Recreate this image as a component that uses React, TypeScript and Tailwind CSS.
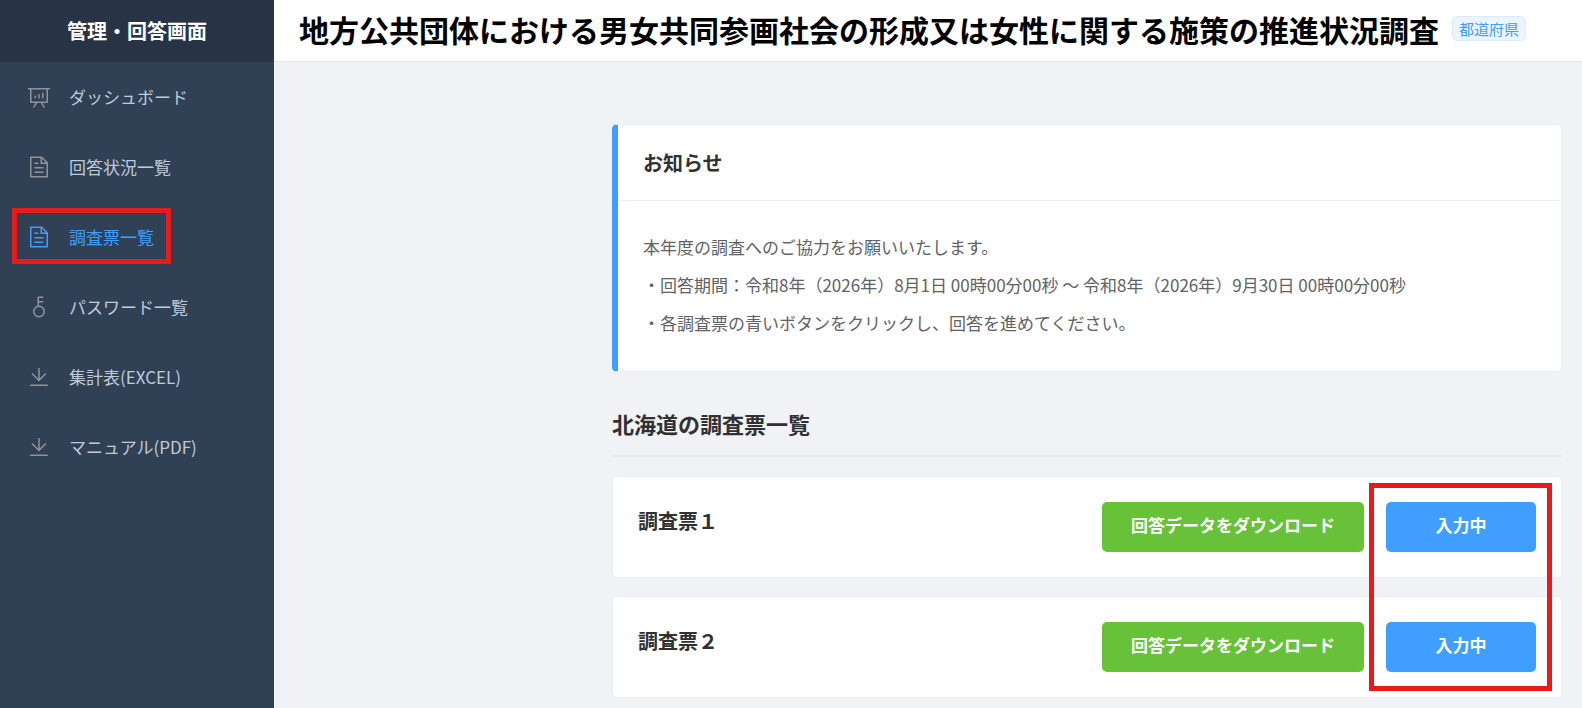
const ICONS = {
  board:
    "M665.216 768l110.848 192h-73.856L591.36 768H433.024L322.176 960H248.32l110.848-192H160a32 32 0 0 1-32-32V192H64a32 32 0 0 1 0-64h896a32 32 0 1 1 0 64h-64v544a32 32 0 0 1-32 32H665.216zM832 192H192v512h640V192zM352 448a32 32 0 0 1 32 32v64a32 32 0 0 1-64 0v-64a32 32 0 0 1 32-32zm160-64a32 32 0 0 1 32 32v128a32 32 0 0 1-64 0V416a32 32 0 0 1 32-32zm160-64a32 32 0 0 1 32 32v192a32 32 0 1 1-64 0V352a32 32 0 0 1 32-32z",
  document:
    "M832 384H576V128H192v768h640V384zm-26.496-64L640 154.496V320h165.504zM160 64h480l256 256v608a32 32 0 0 1-32 32H160a32 32 0 0 1-32-32V96a32 32 0 0 1 32-32zm160 448h384v64H320v-64zm0-192h160v64H320v-64zm0 384h384v64H320v-64z",
  key: "M448 456.064V96a32 32 0 0 1 32-32.064L672 64a32 32 0 0 1 0 64H512v128h160a32 32 0 0 1 0 64H512v128a256 256 0 1 1-64 8.064zM512 896a192 192 0 1 0 0-384 192 192 0 0 0 0 384z",
  download:
    "M160 832h704a32 32 0 1 1 0 64H160a32 32 0 1 1 0-64zm384-253.696 236.288-236.352 45.248 45.248L508.8 704 192 387.2l45.248-45.248L480 584.704V128h64v450.304z",
};

type IconName = keyof typeof ICONS;

const MENU: { label: string; icon: IconName; active?: boolean }[] = [
  { label: "ダッシュボード", icon: "board" },
  { label: "回答状況一覧", icon: "document" },
  { label: "調査票一覧", icon: "document", active: true },
  { label: "パスワード一覧", icon: "key" },
  { label: "集計表(EXCEL)", icon: "download" },
  { label: "マニュアル(PDF)", icon: "download" },
];

const NOTICES = [
  "本年度の調査へのご協力をお願いいたします。",
  "・回答期間：令和8年（2026年）8月1日 00時00分00秒 ～ 令和8年（2026年）9月30日 00時00分00秒",
  "・各調査票の青いボタンをクリックし、回答を進めてください。",
];

const SURVEYS = ["調査票１", "調査票２"];

function Icon({ name }: { name: IconName }) {
  return (
    <svg viewBox="0 0 1024 1024" className="size-6 fill-current" aria-hidden="true">
      <path d={ICONS[name]} />
    </svg>
  );
}

function Sidebar() {
  return (
    <aside className="w-[274px] shrink-0 bg-[#304156]">
      <div className="flex h-[62px] items-center justify-center bg-[#283446] text-xl font-bold text-white">
        管理・回答画面
      </div>
      <nav>
        <ul>
          {MENU.map((item) => (
            <li key={item.label} className="relative">
              <a
                href="#"
                className={
                  item.active
                    ? "flex h-[70px] items-center gap-[18px] px-[27px] text-[17px] text-[#409eff]"
                    : "flex h-[70px] items-center gap-[18px] px-[27px] text-[17px] text-[#bfcbd9]"
                }
              >
                <span className={item.active ? "text-[#409eff]" : "text-[#909399]"}>
                  <Icon name={item.icon} />
                </span>
                {item.label}
              </a>
              {item.active && (
                <div className="pointer-events-none absolute top-1.5 left-3 h-14 w-[159px] border-5 border-[#e61c1c]" />
              )}
            </li>
          ))}
        </ul>
      </nav>
    </aside>
  );
}

function NoticeCard() {
  return (
    <section className="rounded-[5px] border border-l-6 border-[#ebeef5] border-l-[#409eff] bg-white">
      <h2 className="border-b border-[#ebeef5] px-[25px] py-[22px] text-xl leading-[31px] font-bold text-[#303133]">
        お知らせ
      </h2>
      <div className="px-[25px] pt-[27px] pb-[29px] text-[17px] leading-[38px] text-[#606266]">
        {NOTICES.map((line) => (
          <p key={line}>{line}</p>
        ))}
      </div>
    </section>
  );
}

function SurveyList() {
  return (
    <section>
      <h2 className="mt-9 border-b-2 border-[#e4e7ed] pb-4 text-[22px] leading-[31px] font-bold text-[#303133]">
        北海道の調査票一覧
      </h2>
      <ul className="relative mt-[19px] flex flex-col gap-[18px]">
        {SURVEYS.map((name) => (
          <li
            key={name}
            className="flex items-start justify-between rounded-[5px] border border-[#ebeef5] bg-white p-[25px]"
          >
            <h3 className="text-xl leading-[38px] font-bold text-[#303133]">{name}</h3>
            <div className="flex gap-[22px]">
              <button
                type="button"
                className="h-[50px] w-[262px] rounded-[5px] bg-[#67c23a] pb-1 text-[17px] font-bold text-white"
              >
                回答データをダウンロード
              </button>
              <button
                type="button"
                className="h-[50px] w-[150px] rounded-[5px] bg-[#409eff] pb-1 text-[17px] font-bold text-white"
              >
                入力中
              </button>
            </div>
          </li>
        ))}
        <li
          aria-hidden="true"
          className="pointer-events-none absolute inset-y-[7px] right-2.5 w-[183px] border-5 border-[#e61c1c]"
        />
      </ul>
    </section>
  );
}

export default function App() {
  return (
    <div className="flex min-h-screen bg-[#f0f2f5] font-['Noto_Sans_CJK_JP',sans-serif]">
      <Sidebar />
      <div className="min-w-0 flex-1">
        <header className="flex h-[62px] items-center gap-[13px] border-b border-[#e4e7ed] bg-white px-[25px] pb-1">
          <h1 className="text-3xl font-bold text-black">
            地方公共団体における男女共同参画社会の形成又は女性に関する施策の推進状況調査
          </h1>
          <span className="shrink-0 rounded-[5px] border border-[#d9ecff] bg-[#ecf5ff] px-1.5 text-[15px] leading-[23px] text-[#409eff]">
            都道府県
          </span>
        </header>
        <main className="flex justify-end px-5 pt-[62px] pb-2.5">
          <div className="w-full max-w-[950px]">
            <NoticeCard />
            <SurveyList />
          </div>
        </main>
      </div>
    </div>
  );
}
